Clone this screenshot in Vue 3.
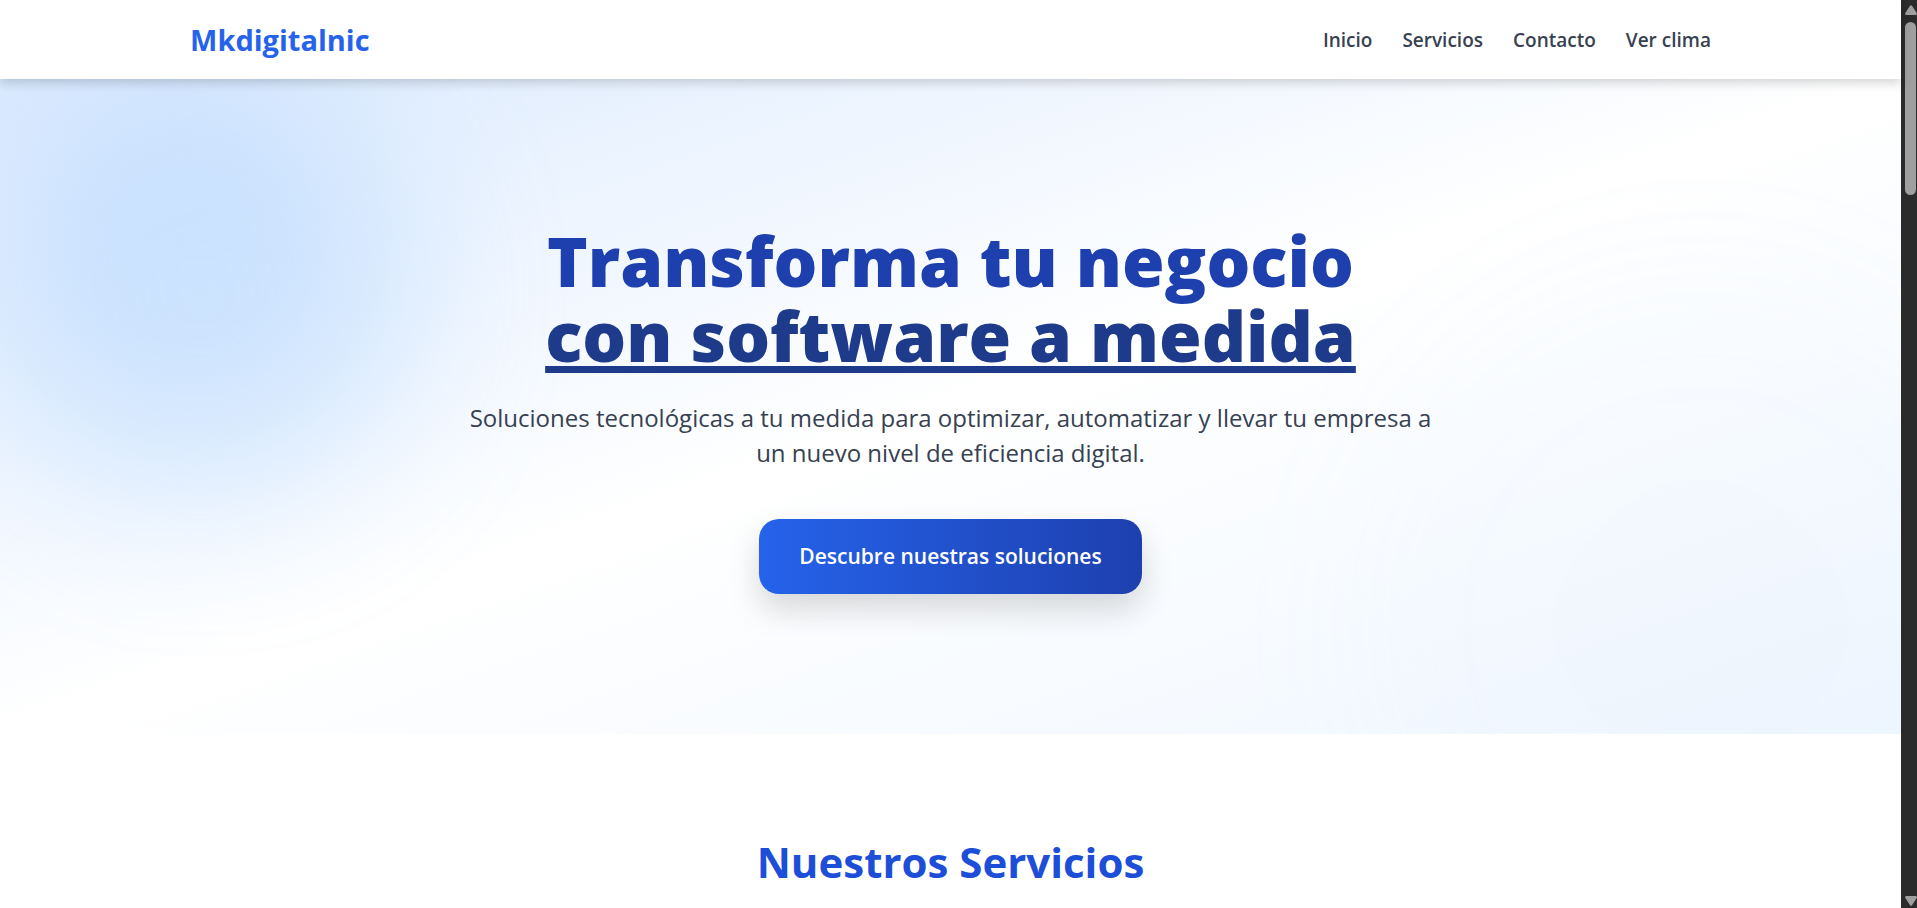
<script setup>
const links = [
  { label: 'Inicio', href: '#inicio' },
  { label: 'Servicios', href: '#servicios' },
  { label: 'Contacto', href: '#contacto' },
  { label: 'Ver clima', href: '#clima' },
]
</script>

<template>
  <div class="shell">
    <div class="page">
      <header class="topbar">
        <a class="brand" href="#inicio">Mkdigitalnic</a>
        <nav class="nav" aria-label="Principal">
          <a v-for="link in links" :key="link.href" :href="link.href">{{ link.label }}</a>
        </nav>
      </header>

      <main>
        <section id="inicio" class="hero">
          <div class="glow glow-left" aria-hidden="true"></div>
          <div class="glow glow-right" aria-hidden="true"></div>
          <div class="hero-content">
            <h1>Transforma tu negocio<br /><span>con software a medida</span></h1>
            <p>
              Soluciones tecnológicas a tu medida para optimizar, automatizar y llevar tu empresa a
              un nuevo nivel de eficiencia digital.
            </p>
            <a class="cta" href="#servicios">Descubre nuestras soluciones</a>
          </div>
        </section>

        <section id="servicios" class="services">
          <h2>Nuestros Servicios</h2>
        </section>
      </main>
    </div>

    <div class="scroll" aria-hidden="true">
      <svg width="12" height="10" viewBox="0 0 12 10"><path d="M5 .8Q6 -.4 7 .8L11.7 8Q12.3 10 10.6 10H1.4Q-.3 10 .3 8Z" fill="#9f9f9f" /></svg>
      <div class="thumb"></div>
      <svg class="down" width="12" height="10" viewBox="0 0 12 10"><path d="M5 9.2Q6 10.4 7 9.2L11.7 2Q12.3 0 10.6 0H1.4Q-.3 0 .3 2Z" fill="#9f9f9f" /></svg>
    </div>
  </div>
</template>

<style>
body {
  background: #fff;
}
</style>

<style scoped>
.shell {
  display: grid;
  grid-template-columns: minmax(0, 1fr) 16px;
  min-height: 100vh;
  font-family: "Segoe UI", "Open Sans", "Noto Sans", sans-serif;
}

.topbar {
  position: relative;
  z-index: 2;
  display: flex;
  align-items: center;
  justify-content: space-between;
  padding: 20px 10%;
  background: #fff;
  box-shadow: 0 4px 10px rgba(0, 0, 0, 0.17);
}

.brand {
  color: #2563eb;
  font-size: 29px;
  line-height: 39px;
  font-weight: 700;
  text-decoration: none;
}

.nav {
  display: flex;
  gap: 30px;
}

.nav a {
  color: #374151;
  font-size: 19px;
  line-height: 30px;
  font-weight: 600;
  text-decoration: none;
}

.hero {
  position: relative;
  overflow: hidden;
  padding: 144px 24px 140px;
  background: linear-gradient(to bottom right, #dbeafe, #fff 50%, #eff6ff);
}

.glow {
  position: absolute;
  border-radius: 50%;
}

.glow-left {
  top: 0;
  left: -10px;
  width: 420px;
  height: 420px;
  background: #93c5fd;
  opacity: 0.35;
  filter: blur(80px);
}

.glow-right {
  right: -150px;
  bottom: -240px;
  width: 700px;
  height: 700px;
  background: #bfdbfe;
  opacity: 0.04;
  filter: blur(80px);
}

.hero-content {
  position: relative;
  display: flex;
  flex-direction: column;
  align-items: center;
  max-width: 1120px;
  margin: 0 auto;
  text-align: center;
}

h1 {
  margin: 0 0 27px;
  color: #1e40af;
  font-size: 69px;
  line-height: 75px;
  font-weight: 800;
}

h1 span {
  color: #1e3a8a;
  text-decoration: underline;
  text-decoration-thickness: 7px;
  text-underline-offset: 4px;
  text-decoration-skip-ink: none;
}

p {
  max-width: 980px;
  margin: 0 0 49px;
  color: #374151;
  font-size: 24px;
  line-height: 35px;
}

.cta {
  padding: 20px 40px;
  border-radius: 20px;
  background: linear-gradient(to right, #2563eb, #1e40af);
  box-shadow: 0 16px 32px rgba(0, 0, 0, 0.15);
  color: #fff;
  font-size: 21px;
  line-height: 35px;
  font-weight: 600;
  text-decoration: none;
}

.services {
  padding: 96px 24px 14px;
}

h2 {
  margin: 0;
  color: #1d4ed8;
  font-size: 42px;
  line-height: 64px;
  font-weight: 700;
  text-align: center;
}

.scroll {
  position: sticky;
  top: 0;
  display: flex;
  flex-direction: column;
  align-items: center;
  box-sizing: border-box;
  height: 100vh;
  padding: 5px 0 2px 3px;
  background: #2b2b2b;
}

.scroll svg {
  flex: none;
}

.thumb {
  width: 11px;
  height: 19vh;
  margin-top: 7px;
  border-radius: 6px;
  background: #9f9f9f;
}

.down {
  margin-top: auto;
}
</style>
